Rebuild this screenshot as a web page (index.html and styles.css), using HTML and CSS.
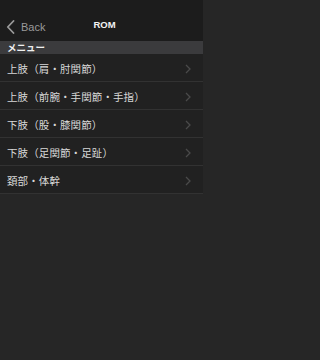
FILE: index.html
```html
<!DOCTYPE html>
<html lang="ja">
<head>
<meta charset="utf-8">
<link rel="stylesheet" href="styles.css">
</head>
<body>
<div class="screen">
  <header class="navbar">
    <div class="back">
      <svg class="back-icon" width="9" height="14" viewBox="0 0 9 14"><path d="M7.5 1 L1.8 7 L7.5 13" fill="none" stroke="#9a9a9a" stroke-width="1.8" stroke-linecap="round" stroke-linejoin="round"/></svg>
      <span class="back-text">Back</span>
    </div>
    <div class="title">ROM</div>
  </header>
  <div class="section">メニュー</div>
  <ul class="list">
    <li class="row"><span class="label">上肢（肩・肘関節）</span><svg class="chev" width="6" height="10" viewBox="0 0 6 10"><path d="M1 1 L5 5 L1 9" fill="none" stroke="#4a4a4a" stroke-width="1.3"/></svg></li>
    <li class="row"><span class="label">上肢（前腕・手関節・手指）</span><svg class="chev" width="6" height="10" viewBox="0 0 6 10"><path d="M1 1 L5 5 L1 9" fill="none" stroke="#4a4a4a" stroke-width="1.3"/></svg></li>
    <li class="row"><span class="label">下肢（股・膝関節）</span><svg class="chev" width="6" height="10" viewBox="0 0 6 10"><path d="M1 1 L5 5 L1 9" fill="none" stroke="#4a4a4a" stroke-width="1.3"/></svg></li>
    <li class="row"><span class="label">下肢（足関節・足趾）</span><svg class="chev" width="6" height="10" viewBox="0 0 6 10"><path d="M1 1 L5 5 L1 9" fill="none" stroke="#4a4a4a" stroke-width="1.3"/></svg></li>
    <li class="row"><span class="label">頚部・体幹</span><svg class="chev" width="6" height="10" viewBox="0 0 6 10"><path d="M1 1 L5 5 L1 9" fill="none" stroke="#4a4a4a" stroke-width="1.3"/></svg></li>
  </ul>
</div>
</body>
</html>
```

FILE: styles.css
```css
html, body {
  margin: 0;
  padding: 0;
  background: #262626;
}
body {
  font-family: "Noto Sans CJK JP", "Liberation Sans", sans-serif;
  width: 203px;
  height: 360px;
  overflow: hidden;
}
.screen {
  display: flex;
  flex-direction: column;
}
.navbar {
  height: 41px;
  background: #1c1c1c;
  display: grid;
  grid-template-columns: 1fr auto 1fr;
  align-items: end;
  padding: 0 0 7px 6px;
  box-sizing: border-box;
}
.back {
  display: flex;
  align-items: center;
  gap: 6px;
}
.back-icon {
  display: block;
}
.back-text {
  font-family: "Liberation Sans", sans-serif;
  font-size: 11px;
  color: #9a9a9a;
  line-height: 14px;
}
.title {
  font-family: "Liberation Sans", sans-serif;
  font-weight: bold;
  font-size: 9.5px;
  color: #f2f2f2;
  line-height: 14px;
  padding-bottom: 2px;
}
.section {
  height: 13px;
  background: #3b3b3d;
  color: #f0f0f0;
  font-weight: bold;
  font-size: 9.5px;
  line-height: 13px;
  padding-left: 7px;
}
.list {
  list-style: none;
  margin: 0;
  padding: 0;
}
.row {
  height: 25px;
  padding: 2px 12px 0 7px;
  border-bottom: 1px solid #323232;
  background: #212121;
  display: flex;
  align-items: center;
  justify-content: space-between;
}
.label {
  font-size: 10.5px;
  color: #d8d8d8;
  letter-spacing: 0.1px;
}
.chev {
  display: block;
}
```
